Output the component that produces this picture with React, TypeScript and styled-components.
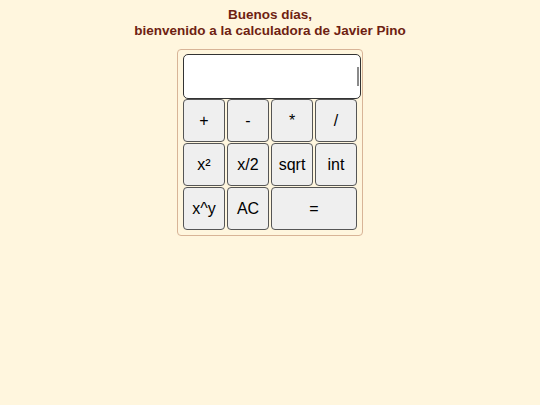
import React from "react";
import styled, { createGlobalStyle } from "styled-components";

const GlobalStyle = createGlobalStyle`
  html, body {
    margin: 0;
    padding: 0;
    background: #fff6de;
    font-family: "Liberation Sans", Arial, sans-serif;
  }
`;

const Page = styled.div`
  min-height: 405px;
  padding-top: 7px;
  display: flex;
  flex-direction: column;
  align-items: center;
`;

const Title = styled.h1`
  margin: 0 0 10px;
  font-size: 13.5px;
  line-height: 16px;
  font-weight: bold;
  color: #6e1f12;
  text-align: center;
`;

const Calculator = styled.div`
  box-sizing: border-box;
  width: 186px;
  padding: 4px 1px 5px 5px;
  border: 1px solid #d8b497;
  border-radius: 4px;
  display: flex;
  flex-direction: column;
`;

const Display = styled.div`
  position: relative;
  box-sizing: border-box;
  width: 178px;
  height: 45px;
  background: #fff;
  border: 1px solid #333;
  border-radius: 5px;
`;

const Scroll = styled.span`
  position: absolute;
  right: 1px;
  top: 12px;
  width: 2px;
  height: 19px;
  background: #8a8a8a;
`;

const Keys = styled.div`
  display: grid;
  grid-template-columns: repeat(4, 42px);
  grid-auto-rows: 43px;
  column-gap: 2px;
  row-gap: 1px;
`;

const Key = styled.button<{ $wide?: boolean }>`
  grid-column: ${({ $wide }) => ($wide ? "span 2" : "span 1")};
  box-sizing: border-box;
  margin: 0;
  padding: 0;
  background: #efefef;
  border: 1px solid #555;
  border-radius: 4px;
  font-family: "Liberation Sans", Arial, sans-serif;
  font-size: 16px;
  color: #000;
  display: flex;
  align-items: center;
  justify-content: center;
`;

const keys = ["+", "-", "*", "/", "x²", "x/2", "sqrt", "int", "x^y", "AC"];

export default function App() {
  return (
    <>
      <GlobalStyle />
      <Page>
        <Title>
          Buenos días,
          <br />
          bienvenido a la calculadora de Javier Pino
        </Title>
        <Calculator>
          <Display>
            <Scroll />
          </Display>
          <Keys>
            {keys.map((k) => (
              <Key key={k}>{k}</Key>
            ))}
            <Key $wide>=</Key>
          </Keys>
        </Calculator>
      </Page>
    </>
  );
}
